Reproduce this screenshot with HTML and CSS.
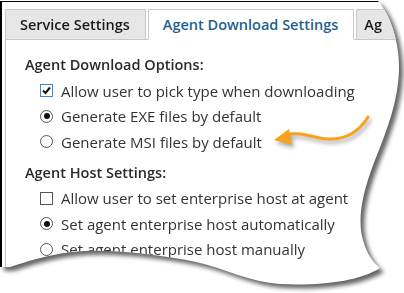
FILE: index.html
```html
<!DOCTYPE html>
<html lang="en">
<head>
    <meta charset="UTF-8">
    <title>Agent Download Settings</title>
    <link rel="stylesheet" href="styles.css">
</head>
<body>
    <div class="shot">
        <div class="paper">
            <div class="tabs">
                <div class="tab">Service Settings</div>
                <div class="tab active">Agent Download Settings</div>
                <div class="tab last">Ag</div>
            </div>

            <div class="panel">
                <div class="section">
                    <h2 class="section-title">Agent Download Options:</h2>
                    <div class="option">
                        <span class="check checked">
                            <svg viewBox="0 0 11 11" width="11" height="11"><path d="M2 5.5 L4.5 8 L9 2.5" fill="none" stroke="#111" stroke-width="2"/></svg>
                        </span>
                        Allow user to pick type when downloading
                    </div>
                    <div class="option"><span class="radio selected"></span>Generate EXE files by default</div>
                    <div class="option"><span class="radio"></span>Generate MSI files by default</div>
                </div>

                <div class="section">
                    <h2 class="section-title">Agent Host Settings:</h2>
                    <div class="option"><span class="check"></span>Allow user to set enterprise host at agent</div>
                    <div class="option"><span class="radio selected"></span>Set agent enterprise host automatically</div>
                    <div class="option"><span class="radio"></span>Set agent enterprise host manually</div>
                </div>
            </div>
        </div>

        <!-- callout arrow drawn over the screenshot -->
        <svg class="arrow" width="404" height="293" viewBox="0 0 404 293">
            <path d="M368 117 C360 130 348 140 328 139 C312 138 302 131 287 135" fill="none" stroke="#f7a21b" stroke-width="3" stroke-linecap="round"/>
            <polygon points="274,140 289,129 292,145" fill="#f7a21b"/>
        </svg>
    </div>
</body>
</html>
```

FILE: styles.css
```css
* {
    margin: 0;
    padding: 0;
    box-sizing: border-box;
}

body {
    background: #fff;
    font-family: 'Open Sans', 'Noto Sans', sans-serif;
    color: #333;
    width: 404px;
    height: 293px;
    overflow: hidden;
}

.shot {
    position: relative;
    padding-top: 1px;
    filter: drop-shadow(4px 4px 2px rgba(0, 0, 0, 0.6));
}

.paper {
    width: 404px;
    height: 292px;
    background: #fff;
    border-top: 1px solid #000;
    border-left: 2px solid #000;
    clip-path: path('M0 0 L378 0 C391 14 400 44 399 70 C398 100 387 129 377 154 C365 184 356 214 363 239 C367 254 374 262 380 267 C358 281 318 285 280 283 C250 281 226 268 196 261 C160 254 110 247 72 251 C46 254 26 261 10 266 L0 266 Z');
}

.tabs {
    display: flex;
    gap: 2px;
    padding: 7px 0 0 3px;
    margin-bottom: -1px;
    overflow: hidden;
}

.tab {
    height: 31px;
    line-height: 29px;
    padding: 0 15px 0 14px;
    border: 1px solid #c8c8c8;
    background: #e6e6e6;
    font-size: 14.5px;
    font-weight: 600;
    color: #1a1a1a;
    white-space: nowrap;
}

.tab.active {
    position: relative;
    z-index: 1;
    background: #fff;
    border-bottom-color: #fff;
    color: #1f5f8e;
}

.tab.last {
    padding-right: 40px;
    padding-left: 7px;
}

.panel {
    margin-left: 3px;
    height: 240px;
    border-top: 1px solid #c8c8c8;
    border-left: 1px solid #c8c8c8;
    padding: 15px 0 0 19px;
}

.section + .section {
    margin-top: 8px;
}

.section-title {
    font-size: 14.5px;
    font-weight: 600;
    line-height: 20px;
    color: #2a2a2a;
    margin-bottom: 3px;
}

.option {
    display: flex;
    align-items: center;
    gap: 8px;
    height: 25.5px;
    padding-left: 15px;
    font-size: 15px;
    white-space: nowrap;
}

.check {
    width: 13px;
    height: 13px;
    border: 1px solid #555;
    background: #fff;
    display: flex;
    align-items: center;
    justify-content: center;
    flex-shrink: 0;
}

.check.checked {
    border-color: #3b8ad9;
}

.radio {
    width: 13px;
    height: 13px;
    border: 1px solid #555;
    border-radius: 50%;
    background: #fff;
    display: flex;
    align-items: center;
    justify-content: center;
    flex-shrink: 0;
}

.radio.selected::after {
    content: '';
    width: 6px;
    height: 6px;
    border-radius: 50%;
    background: #111;
}

.arrow {
    position: absolute;
    top: 0;
    left: 0;
    filter: drop-shadow(2px 3px 2px rgba(0, 0, 0, 0.35));
}
```
